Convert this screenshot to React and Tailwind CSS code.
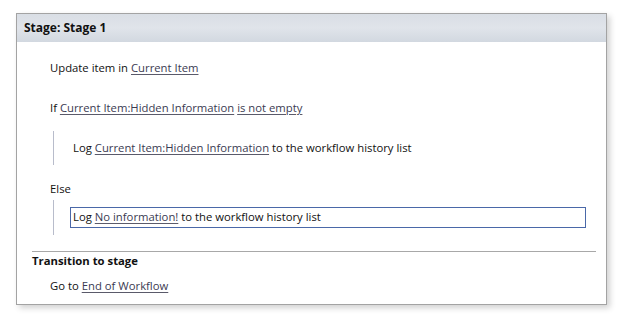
import React from 'react';

const Link = ({ children }) => (
  <span className="underline underline-offset-2 decoration-[#5a5a6a] text-[#3b3b52]">{children}</span>
);

const App = () => {
  return (
    <div className="w-[640px] h-[317px] bg-white pt-[13px] pl-[16px] font-['Open_Sans','Noto_Sans',sans-serif] text-[11.3px] text-[#111]">
      <div className="w-[591px] h-[292px] border border-[#a3a3a3] bg-white shadow-[3px_3px_6px_rgba(0,0,0,0.18)] flex flex-col">
        {/* Stage header */}
        <div className="h-[28px] flex items-center pl-[7px] font-bold text-[12px] bg-gradient-to-b from-[#d9dee5] via-[#e0e4ea] to-[#d2d8e0]">
          Stage: Stage 1
        </div>

        <div className="flex flex-col pl-[33px] pt-[18px]">
          <div className="h-[16px] leading-[16px]">
            Update item in <Link>Current Item</Link>
          </div>

          <div className="h-[16px] leading-[16px] mt-[24px]">
            If <Link>Current Item:Hidden Information</Link> <Link>is not empty</Link>
          </div>

          <div className="mt-[15px] ml-[3px] h-[34px] border-l border-[#b8bccb] flex items-center pl-[19px]">
            <span>
              Log <Link>Current Item:Hidden Information</Link> to the workflow history list
            </span>
          </div>

          <div className="h-[16px] leading-[16px] mt-[16px]">Else</div>

          <div className="mt-[3px] ml-[3px] h-[35px] border-l border-[#b8bccb] pl-[16px] pt-[7px]">
            <div className="w-[516px] h-[21px] border border-[#4a68a8] flex items-center pl-[2px]">
              <span>
                Log <Link>No information!</Link> to the workflow history list
              </span>
            </div>
          </div>
        </div>

        <div className="mt-[16px] ml-[15px] mr-[10px] border-t border-[#a8a8a8]" />
        <div className="ml-[15px] h-[17px] leading-[17px] font-bold">Transition to stage</div>
        <div className="ml-[33px] mt-[9px] h-[16px] leading-[16px]">
          Go to <Link>End of Workflow</Link>
        </div>
      </div>
    </div>
  );
};

export default App;
